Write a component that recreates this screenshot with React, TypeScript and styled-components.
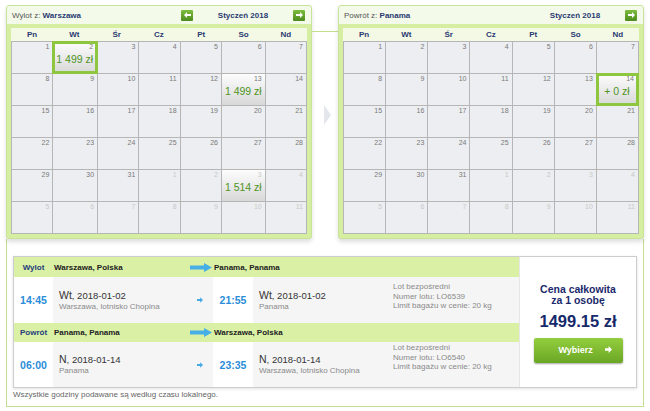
import React from "react";
import styled, { createGlobalStyle, css } from "styled-components";

const GlobalStyle = createGlobalStyle`
  html, body { margin: 0; padding: 0; background: #ffffff; }
  body { font-family: "Liberation Sans", Arial, sans-serif; color: #333; }
  * { box-sizing: border-box; }
`;

const Page = styled.div`
  width: 650px;
  padding: 5px 6px 0 6px;
`;

const Wrapper = styled.div`
  width: 638px;
`;

const TopRow = styled.div`
  display: flex;
  align-items: flex-start;
  position: relative;
  z-index: 1;
`;

/* ---------- Calendar ---------- */

const Panel = styled.div`
  width: 306px;
  border: 1px solid #c8e498;
  border-radius: 3px;
  background: #d6eea2;
  box-shadow: 0 3px 4px rgba(0, 0, 0, 0.13);
  display: flex;
  flex-direction: column;
`;

const PanelHeader = styled.div`
  height: 18px;
  background: #f4faea;
  border-radius: 2px 2px 0 0;
  display: flex;
  align-items: center;
  justify-content: space-between;
  padding: 0 6px 0 5px;
  font-size: 8px;
`;

const HeaderLabel = styled.span`
  color: #555;
  white-space: nowrap;
`;

const HeaderCity = styled.b`
  color: #2a3a72;
`;

const Nav = styled.div`
  width: 124px;
  display: flex;
  align-items: center;
`;

const Month = styled.span`
  flex: 1;
  text-align: center;
  font-weight: bold;
  color: #2a3a72;
  font-size: 8px;
`;

const NavButton = styled.span<{ $hidden?: boolean }>`
  width: 12px;
  height: 11px;
  border-radius: 1px;
  background: linear-gradient(#7dbd3d, #4c8b1e);
  display: flex;
  align-items: center;
  justify-content: center;
  visibility: ${(p) => (p.$hidden ? "hidden" : "visible")};
`;

const PanelBody = styled.div`
  padding: 4px;
  display: flex;
  flex-direction: column;
`;

const DayNames = styled.div`
  display: grid;
  grid-template-columns: repeat(7, 1fr);
  height: 13px;
  background: #f3f9e5;
  font-size: 8px;
  font-weight: bold;
  color: #2a3a72;
  line-height: 13px;
  text-align: center;
`;

const Grid = styled.div`
  display: grid;
  grid-template-columns: repeat(7, 1fr);
  grid-auto-rows: 31px;
  gap: 1px;
  background: #b6b6b6;
  border: 1px solid #b6b6b6;
`;

const Cell = styled.div<{ $price?: boolean; $selected?: boolean }>`
  position: relative;
  background: #eceef1;
  padding: 1px 3px 0 3px;
  display: flex;
  flex-direction: column;
  ${(p) =>
    p.$price &&
    css`
      background: linear-gradient(#fdfdfd, #d8d8d8);
    `}
  ${(p) =>
    p.$selected &&
    css`
      z-index: 1;
      outline: 3px solid #8fc63f;
      outline-offset: -2px;
      padding: 1px 4px 0 3px;
    `}
`;

const DayNum = styled.span<{ $muted?: boolean }>`
  font-size: 7px;
  line-height: 8px;
  text-align: right;
  color: ${(p) => (p.$muted ? "#c9c9c9" : "#7a7a7a")};
`;

const CellPrice = styled.span`
  margin-top: 2px;
  font-size: 10.5px;
  line-height: 12px;
  text-align: center;
  white-space: nowrap;
  color: #4f9424;
`;

/* ---------- Connector between calendars ---------- */

const Connector = styled.div`
  width: 26px;
  margin-top: 26px;
  border-top: 1px solid #c3df92;
  padding: 73px 0 0 12px;
  display: flex;
`;

/* ---------- Bottom section ---------- */

const Frame = styled.div`
  border: 1px solid #c3df92;
  border-top: none;
  padding: 17px 6px 6px 6px;
`;

const FlightBox = styled.div`
  display: flex;
  border: 1px solid #cdcdcd;
  box-shadow: 0 1px 3px rgba(0, 0, 0, 0.12);
  background: #fff;
`;

const Legs = styled.div`
  width: 505px;
  display: flex;
  flex-direction: column;
`;

const cols = "39px 137px 23px 40px 140px 126px";

const LegHead = styled.div<{ $h: number }>`
  display: grid;
  grid-template-columns: ${cols};
  height: ${(p) => p.$h}px;
  background: #daf1a5;
  align-items: center;
  font-size: 8px;
  font-weight: bold;
  color: #222;
`;

const LegKind = styled.span`
  color: #263c7c;
  text-align: center;
`;

const LegPlace = styled.span<{ $span?: boolean }>`
  padding-left: 1px;
  white-space: nowrap;
  ${(p) =>
    p.$span &&
    css`
      grid-column: 4 / span 3;
    `}
`;

const BigArrow = styled.span`
  display: flex;
  align-items: center;
`;

const LegDetail = styled.div<{ $h: number }>`
  display: grid;
  grid-template-columns: ${cols};
  height: ${(p) => p.$h}px;
`;

const TimeCell = styled.div`
  background: #fff;
  display: flex;
  align-items: center;
  justify-content: center;
  font-size: 10.5px;
  font-weight: bold;
  color: #2a8dd8;
`;

const GrayCell = styled.div`
  background: #f5f5f5;
  display: flex;
  align-items: center;
`;

const DateBlock = styled(GrayCell)`
  flex-direction: column;
  align-items: flex-start;
  justify-content: center;
  padding-left: 6px;
`;

const DateLine = styled.div`
  font-size: 9.5px;
  line-height: 12px;
  color: #333;
  white-space: nowrap;
`;

const DayAbbr = styled.span`
  font-size: 10.5px;
`;

const Place = styled.div`
  font-size: 8px;
  line-height: 10px;
  color: #8a8a8a;
  white-space: nowrap;
`;

const SmallArrowCell = styled(GrayCell)`
  justify-content: center;
  padding-right: 4px;
`;

const InfoCell = styled.div<{ $top: number }>`
  background: #f5f5f5;
  padding-top: ${(p) => p.$top}px;
  font-size: 8px;
  line-height: 9.5px;
  color: #8a8a8a;
  white-space: nowrap;
`;

const PriceCol = styled.div`
  flex: 1;
  border-left: 1px solid #e6e6e6;
  display: flex;
  flex-direction: column;
  align-items: center;
  justify-content: center;
  padding-top: 2px;
`;

const PriceTitle = styled.div`
  font-size: 10.5px;
  line-height: 11.5px;
  font-weight: bold;
  color: #1c2a6c;
  text-align: center;
`;

const PriceAmount = styled.div`
  margin-top: 5px;
  font-size: 16.5px;
  line-height: 19px;
  font-weight: bold;
  color: #16296b;
`;

const SelectButton = styled.button`
  margin-top: 7px;
  width: 89px;
  height: 25px;
  border: none;
  border-radius: 2px;
  background: linear-gradient(#94cd3f, #6aa724);
  box-shadow: 0 1px 2px rgba(0, 0, 0, 0.35);
  color: #fff;
  font-family: "Liberation Sans", Arial, sans-serif;
  font-size: 9px;
  font-weight: bold;
  display: flex;
  align-items: center;
  justify-content: flex-start;
  gap: 12px;
  padding: 0 0 1px 25px;
`;

const ButtonArrow = styled.svg`
  flex-shrink: 0;
  display: block;
`;

const Footer = styled.div`
  margin-top: 2px;
  font-size: 8px;
  line-height: 10px;
  color: #666;
`;

/* ---------- Icons ---------- */

const NavArrow = ({ dir }: { dir: "left" | "right" }) => (
  <svg width="7" height="6" viewBox="0 0 7 6">
    <path
      d={dir === "left" ? "M0 3 L3 0 V2 H7 V4 H3 V6 Z" : "M7 3 L4 0 V2 H0 V4 H4 V6 Z"}
      fill="#fff"
    />
  </svg>
);

const BlueArrow = () => (
  <svg width="22" height="9" viewBox="0 0 22 9">
    <path d="M0 2.5 H14 V0 L22 4.5 L14 9 V6.5 H0 Z" fill="#47aee6" />
  </svg>
);

const TinyArrow = ({ color }: { color: string }) => (
  <svg width="6" height="6" viewBox="0 0 6 6">
    <path d="M6 3 L3.2 0.2 V2 H0 V4 H3.2 V5.8 Z" fill={color} />
  </svg>
);

const GrayTriangle = () => (
  <svg width="7" height="20" viewBox="0 0 7 20">
    <path d="M0 0 L7 10 L0 20 Z" fill="#e3e6ea" />
  </svg>
);

/* ---------- Data ---------- */

type Day = { n: number; muted?: boolean; price?: string; selected?: boolean };

function buildMonth(extra: Record<string, { price: string; selected?: boolean }>): Day[] {
  const days: Day[] = [];
  for (let i = 1; i <= 31; i++) days.push({ n: i, ...(extra[`1-${i}`] || {}) });
  for (let i = 1; i <= 11; i++) days.push({ n: i, muted: true, ...(extra[`2-${i}`] || {}) });
  return days;
}

const outDays = buildMonth({
  "1-2": { price: "1 499 zł", selected: true },
  "1-13": { price: "1 499 zł" },
  "2-3": { price: "1 514 zł" },
});

const backDays = buildMonth({
  "1-14": { price: "+ 0 zł", selected: true },
});

const dayNames = ["Pn", "Wt", "Śr", "Cz", "Pt", "So", "Nd"];

const Calendar = ({
  label,
  city,
  showPrev,
  days,
}: {
  label: string;
  city: string;
  showPrev: boolean;
  days: Day[];
}) => (
  <Panel>
    <PanelHeader>
      <HeaderLabel>
        {label} <HeaderCity>{city}</HeaderCity>
      </HeaderLabel>
      <Nav>
        <NavButton $hidden={!showPrev}>
          <NavArrow dir="left" />
        </NavButton>
        <Month>Styczeń 2018</Month>
        <NavButton>
          <NavArrow dir="right" />
        </NavButton>
      </Nav>
    </PanelHeader>
    <PanelBody>
      <DayNames>
        {dayNames.map((d) => (
          <span key={d}>{d}</span>
        ))}
      </DayNames>
      <Grid>
        {days.map((d, i) => (
          <Cell key={i} $price={!!d.price} $selected={d.selected}>
            <DayNum $muted={d.muted}>{d.n}</DayNum>
            {d.price && <CellPrice>{d.price}</CellPrice>}
          </Cell>
        ))}
      </Grid>
    </PanelBody>
  </Panel>
);

type Leg = {
  kind: string;
  from: string;
  to: string;
  depTime: string;
  depDay: string;
  depDate: string;
  depPlace: string;
  arrTime: string;
  arrDay: string;
  arrDate: string;
  arrPlace: string;
  flight: string;
  headH: number;
  detailH: number;
  infoTop: number;
};

const legs: Leg[] = [
  {
    kind: "Wylot",
    from: "Warszawa, Polska",
    to: "Panama, Panama",
    depTime: "14:45",
    depDay: "Wt",
    depDate: "2018-01-02",
    depPlace: "Warszawa, lotnisko Chopina",
    arrTime: "21:55",
    arrDay: "Wt",
    arrDate: "2018-01-02",
    arrPlace: "Panama",
    flight: "LO6539",
    headH: 20,
    detailH: 46,
    infoTop: 5,
  },
  {
    kind: "Powrót",
    from: "Panama, Panama",
    to: "Warszawa, Polska",
    depTime: "06:00",
    depDay: "N",
    depDate: "2018-01-14",
    depPlace: "Panama",
    arrTime: "23:35",
    arrDay: "N",
    arrDate: "2018-01-14",
    arrPlace: "Warszawa, lotnisko Chopina",
    flight: "LO6540",
    headH: 19,
    detailH: 45,
    infoTop: 1,
  },
];

const LegRows = ({ leg }: { leg: Leg }) => (
  <>
    <LegHead $h={leg.headH}>
      <LegKind>{leg.kind}</LegKind>
      <LegPlace>{leg.from}</LegPlace>
      <BigArrow>
        <BlueArrow />
      </BigArrow>
      <LegPlace $span>{leg.to}</LegPlace>
    </LegHead>
    <LegDetail $h={leg.detailH}>
      <TimeCell>{leg.depTime}</TimeCell>
      <DateBlock>
        <DateLine>
          <DayAbbr>{leg.depDay}</DayAbbr>, {leg.depDate}
        </DateLine>
        <Place>{leg.depPlace}</Place>
      </DateBlock>
      <SmallArrowCell>
        <TinyArrow color="#45a9e3" />
      </SmallArrowCell>
      <TimeCell>{leg.arrTime}</TimeCell>
      <DateBlock>
        <DateLine>
          <DayAbbr>{leg.arrDay}</DayAbbr>, {leg.arrDate}
        </DateLine>
        <Place>{leg.arrPlace}</Place>
      </DateBlock>
      <InfoCell $top={leg.infoTop}>
        <div>Lot bezpośredni</div>
        <div>Numer lotu: {leg.flight}</div>
        <div>Limit bagażu w cenie: 20 kg</div>
      </InfoCell>
    </LegDetail>
  </>
);

export default function App() {
  return (
    <>
      <GlobalStyle />
      <Page>
        <Wrapper>
          <TopRow>
            <Calendar label="Wylot z:" city="Warszawa" showPrev days={outDays} />
            <Connector>
              <GrayTriangle />
            </Connector>
            <Calendar label="Powrót z:" city="Panama" showPrev={false} days={backDays} />
          </TopRow>
          <Frame>
            <FlightBox>
              <Legs>
                {legs.map((l) => (
                  <LegRows key={l.kind} leg={l} />
                ))}
              </Legs>
              <PriceCol>
                <PriceTitle>
                  Cena całkowita
                  <br />
                  za 1 osobę
                </PriceTitle>
                <PriceAmount>1499.15 zł</PriceAmount>
                <SelectButton>
                  <span>Wybierz</span>
                  <ButtonArrow width="7" height="7" viewBox="0 0 7 7">
                    <path d="M7 3.5 L3.6 0.1 V2.3 H0 V4.7 H3.6 V6.9 Z" fill="#ffffff" />
                  </ButtonArrow>
                </SelectButton>
              </PriceCol>
            </FlightBox>
            <Footer>Wszystkie godziny podawane są według czasu lokalnego.</Footer>
          </Frame>
        </Wrapper>
      </Page>
    </>
  );
}
